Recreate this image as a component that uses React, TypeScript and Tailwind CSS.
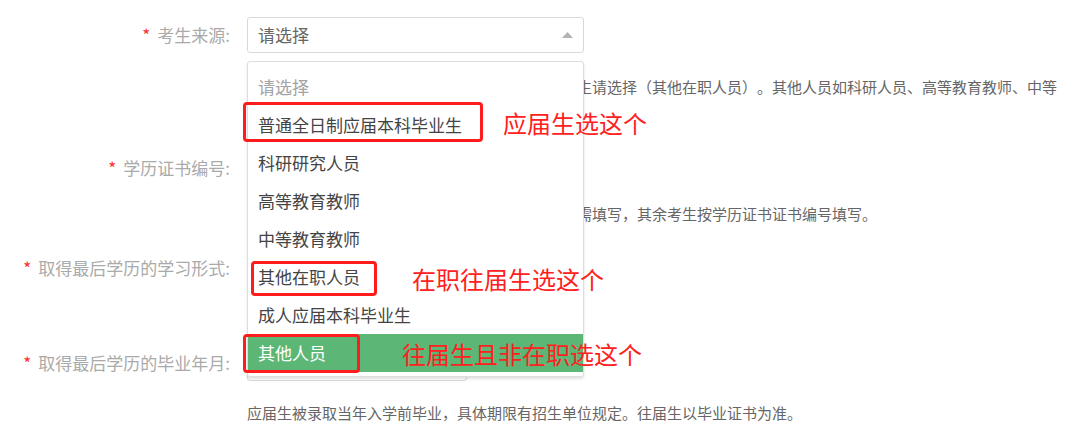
import React from 'react'

const options = [
  '普通全日制应届本科毕业生',
  '科研研究人员',
  '高等教育教师',
  '中等教育教师',
  '其他在职人员',
  '成人应届本科毕业生',
  '其他人员',
]

function Label({ text }: { text: string }) {
  return (
    <div className="w-[232px] shrink-0 pr-[2px] text-right text-[17px] leading-[24px] text-[#aaaaaa]">
      <span className="mr-[7px] text-[#ff3030]">*</span>
      {text}:
    </div>
  )
}

function Caret() {
  return (
    <svg width="11" height="6" viewBox="0 0 11 6" className="block">
      <path d="M0 6 L5.5 0 L11 6 Z" fill="#b4b4b4" />
    </svg>
  )
}

function Dropdown() {
  return (
    <div className="absolute left-0 top-[44px] z-10 w-[337px] rounded-[3px] border border-[#dedede] bg-white pt-[6px] pb-[4px] shadow-[0_2px_3px_rgba(0,0,0,0.12)]">
      <div className="flex h-[38px] items-center px-[10px] text-[17px] text-[#a3a3a3]">请选择</div>
      {options.map((o, i) => (
        <div
          key={o}
          className={`flex h-[38px] items-center px-[10px] text-[17px] ${
            i === options.length - 1 ? 'bg-[#5cb777] text-white' : 'text-[#444444]'
          }`}
        >
          {o}
        </div>
      ))}
    </div>
  )
}

export default function App() {
  return (
    <div className="relative h-[444px] w-[1080px] overflow-hidden bg-white font-['Noto_Sans_CJK_SC',sans-serif] [text-spacing-trim:space-all]">
      <div className="pt-[17px]">
        <div className="flex items-center">
          <Label text="考生来源" />
          <div className="relative ml-[15px] w-[337px]">
            <div className="flex h-[36px] items-center justify-between rounded-[3px] border border-[#d9d9d9] pl-[10px] pr-[10px] text-[17px] text-[#666666]">
              <span>请选择</span>
              <Caret />
            </div>
            <Dropdown />
          </div>
        </div>

        <p className="ml-[247px] mt-[24px] whitespace-nowrap text-[15px] leading-[20px] text-[#666666]">
          应届生选择普通全日制应届本科毕业生，在职往届生请选择（其他在职人员）。其他人员如科研人员、高等教育教师、中等
          <br />
          教育教师等请选择（其他人员）。
        </p>

        <div className="mt-[33px] flex items-center">
          <Label text="学历证书编号" />
          <div className="ml-[15px] h-[36px] w-[337px] rounded-[3px] border border-[#d9d9d9]" />
        </div>

        <p className="ml-[247px] mt-[18px] whitespace-nowrap text-[15px] leading-[20px] text-[#666666]">
          应届本科毕业生考生（含成人应届本科毕业生）无需填写，其余考生按学历证书证书编号填写。
        </p>

        <div className="mt-[26px] flex items-center">
          <Label text="取得最后学历的学习形式" />
          <div className="ml-[15px] h-[36px] w-[337px] rounded-[3px] border border-[#d9d9d9]" />
        </div>

        <div className="mt-[59px] flex items-center">
          <Label text="取得最后学历的毕业年月" />
          <div className="ml-[15px] h-[36px] w-[220px] rounded-[3px] border border-[#d9d9d9]" />
        </div>

        <p className="ml-[247px] mt-[22px] whitespace-nowrap text-[15px] leading-[20px] text-[#666666]">
          应届生被录取当年入学前毕业，具体期限有招生单位规定。往届生以毕业证书为准。
        </p>
      </div>

      {/* annotations */}
      <div className="absolute left-[243px] top-[102px] z-20 h-[40px] w-[240px] rounded-[4px] border-[3px] border-[#ff1c1c]" />
      <div className="absolute left-[251px] top-[261px] z-20 h-[35px] w-[126px] rounded-[4px] border-[3px] border-[#ff1c1c]" />
      <div className="absolute left-[243px] top-[334px] z-20 h-[39px] w-[117px] rounded-[4px] border-[3px] border-[#ff1c1c]" />

      <div className="absolute left-[503px] top-[108px] z-20 text-[24px] leading-[30px] text-[#ff2020]">应届生选这个</div>
      <div className="absolute left-[412px] top-[264px] z-20 text-[24px] leading-[30px] text-[#ff2020]">在职往届生选这个</div>
      <div className="absolute left-[402px] top-[339px] z-20 text-[24px] leading-[30px] text-[#ff2020]">往届生且非在职选这个</div>
    </div>
  )
}
